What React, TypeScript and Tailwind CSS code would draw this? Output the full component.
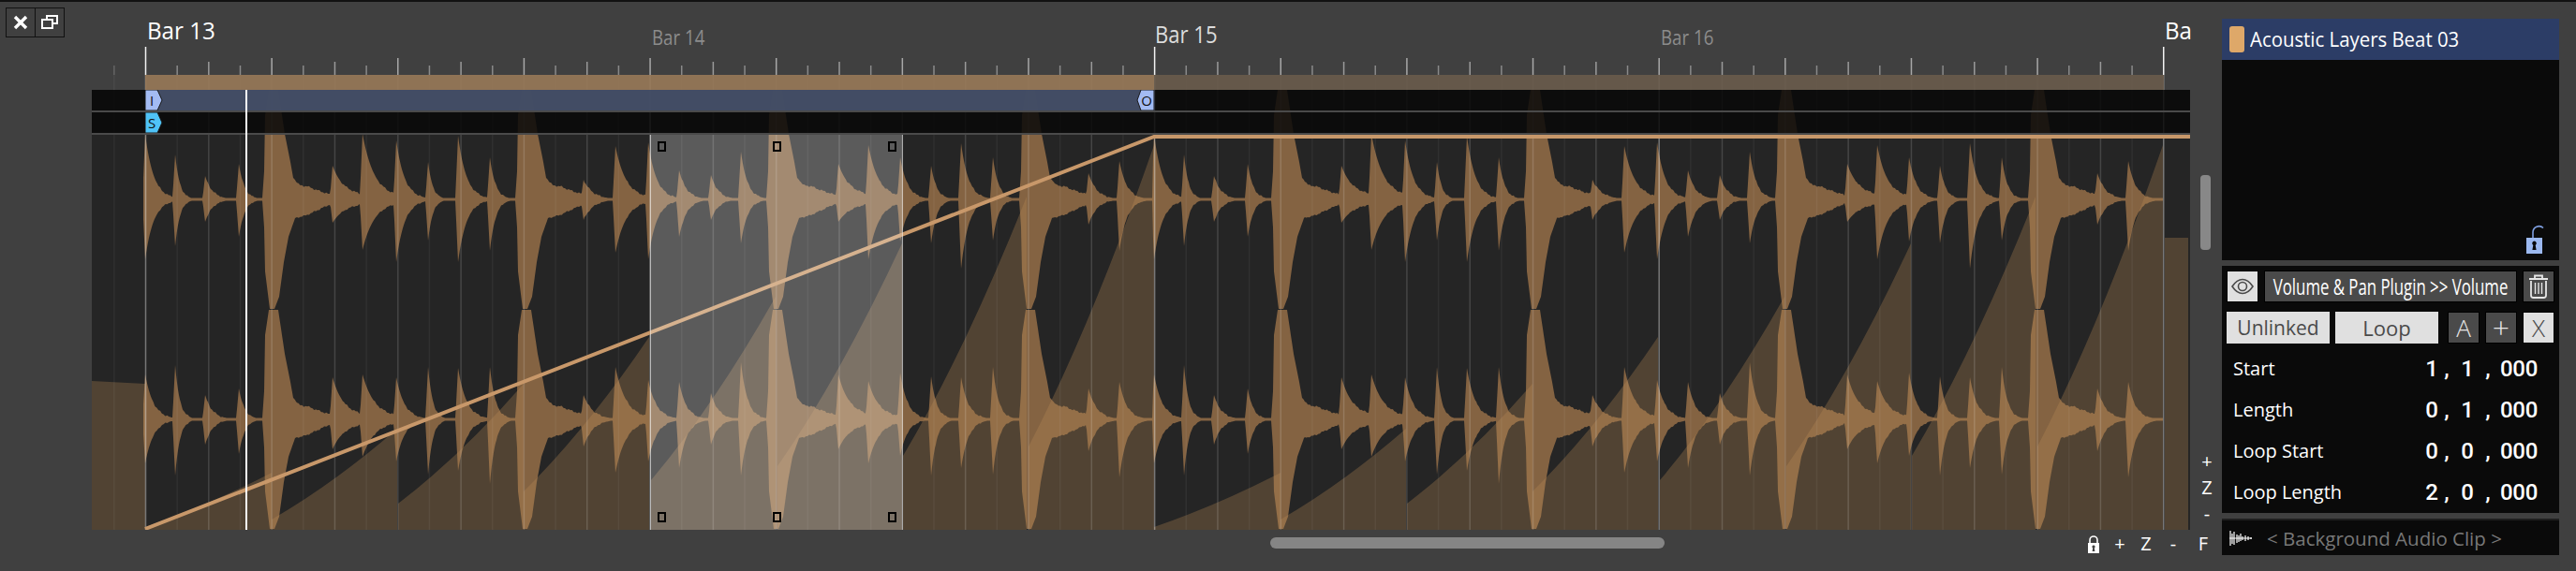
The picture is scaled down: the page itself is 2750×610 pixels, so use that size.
import { useMemo } from 'react';

const BAR_X = 155.5;
const SIXTEENTH = 33.66;
const LOOP = 1077;

// x, up / down of the left channel, up / down of the right channel, decay, tail
const hits: number[][] = [
  [155, 70, 64, 48, 47, 9, 0],
  [187, 48, 50, 58, 60, 5, 0],
  [219, 25, 24, 26, 27, 8, 0],
  [255, 38, 40, 33, 37, 6, 0],
  [355, 36, 25, 45, 32, 10, 9],
  [387, 70, 54, 48, 40, 12, 5],
  [423, 63, 67, 45, 45, 9, 0],
  [457, 40, 44, 56, 59, 5, 0],
  [489, 68, 67, 55, 55, 9, 0],
  [523, 45, 55, 56, 69, 6, 0],
  [623, 21, 22, 26, 29, 10, 0],
  [657, 57, 57, 56, 57, 11, 2],
  [692, 61, 64, 42, 45, 9, 0],
  [725, 31, 40, 40, 52, 8, 0],
  [759, 26, 22, 28, 27, 8, 0],
  [791, 51, 47, 61, 60, 7, 0],
  [895, 38, 24, 48, 32, 10, 9],
  [927, 58, 64, 41, 47, 10, 5],
  [961, 45, 45, 50, 39, 8, 0],
  [994, 36, 47, 46, 60, 6, 0],
  [1026, 60, 74, 45, 52, 8, 0],
  [1060, 45, 44, 56, 59, 6, 0],
  [1162, 28, 27, 33, 34, 9, 0],
  [1195, 41, 55, 40, 62, 8, 0],
];
const bigHits = [283, 553, 821, 1091];

const bigUp = [[-3, 0], [-1, 30], [0, 90], [4, 117], [14, 117], [21, 70], [27, 40], [30, 23], [37, 15], [45, 14], [55, 10], [70, 5], [80, 2]];
const bigDown = [[-3, 0], [-1, 30], [0, 77], [5, 117], [10, 117], [15, 104], [20, 67], [25, 40], [32, 20], [44, 17], [55, 12], [70, 5], [80, 2]];

function lerpTable(table: number[][], t: number) {
  if (t <= table[0][0] || t >= table[table.length - 1][0]) return 0;
  for (let i = 1; i < table.length; i++) {
    if (t <= table[i][0]) {
      const [a, av] = table[i - 1];
      const [b, bv] = table[i];
      return av + ((bv - av) * (t - a)) / (b - a);
    }
  }
  return 0;
}

function decay(t: number, amp: number, tau: number, tail: number) {
  if (t < -3 || t > 140) return 0;
  if (t < 0) return (amp * (t + 3)) / 3;
  const rest = tail * Math.exp(-t / 45);
  return rest + (amp - rest) * Math.exp(-t / tau);
}

function wobble(x: number) {
  return Math.sin(x * 1.7) * 0.5 + Math.sin(x * 0.63 + 1) * 0.6;
}

function channelPath(center: number, channel: 0 | 1) {
  const ups: string[] = [];
  const downs: string[] = [];
  for (let x = 153; x <= 2309; x++) {
    const local = x > 1230 ? x - LOOP : x;
    let up = 0;
    let down = 0;
    for (const h of hits) {
      up = Math.max(up, decay(local - h[0], h[1 + channel * 2], h[5], h[6]));
      down = Math.max(down, decay(local - h[0], h[2 + channel * 2], h[5], h[6]));
    }
    for (const b of bigHits) {
      up = Math.max(up, lerpTable(bigUp, local - b));
      down = Math.max(down, lerpTable(bigDown, local - b));
    }
    const w = up > 3 && up < 20 ? wobble(x) : 0;
    const u = Math.min(Math.max(up + w, x < 155 ? 0 : 1.5), 117);
    const d = Math.min(Math.max(down + w * 0.8, x < 155 ? 0 : 1.5), 117);
    ups.push(`${x},${(center - u).toFixed(1)}`);
    downs.unshift(`${x},${(center + d).toFixed(1)}`);
  }
  return `M${ups.join('L')}L${downs.join('L')}Z`;
}

// one saw tooth of the clip's volume shape
const teeth = [
  [155, 563, 290, 505],
  [290, 555, 424, 458],
  [425, 538, 559, 410],
  [559, 525, 693, 360],
  [695, 513, 828, 317],
  [830, 498, 963, 260],
  [964, 487, 1096, 210],
  [1098, 477, 1232, 155],
];

function toothPath([x0, y0, x1, y1]: number[], off: number) {
  const cx = (x0 + x1) / 2 + off;
  const cy = (y0 + y1) / 2 + (y0 - y1) * 0.1;
  return `M${x0 + off},566L${x0 + off},${y0}Q${cx},${cy} ${x1 + off},${y1}L${x1 + off},566Z`;
}

function Waveform() {
  const topWave = useMemo(() => channelPath(213, 0), []);
  const bottomWave = useMemo(() => channelPath(448, 1), []);
  const lines = Array.from({ length: 66 }, (_, k) => k - 1);

  return (
    <svg className="absolute inset-0" width={2240} height={486} viewBox="98 80 2240 486">
      <rect x={98} y={96} width={2240} height={470} fill="#252525" />
      <path d={topWave} fill="#846342" />
      <path d={bottomWave} fill="#846342" />
      <g fill="#bb8c57" fillOpacity={0.3}>
        <path d="M98,407L155,410L155,566L98,566Z" />
        {teeth.map((t) => (
          <path key={t[0]} d={toothPath(t, 0)} />
        ))}
        {teeth.map((t) => (
          <path key={t[0]} d={toothPath(t, LOOP)} />
        ))}
        <rect x={2311} y={254} width={25} height={312} />
      </g>
      {lines.map((i) => {
        const x = BAR_X + i * SIXTEENTH;
        let alpha = 0.05;
        if (i % 2 === 0) alpha = 0.15;
        if (i % 16 === 0) alpha = 0.38;
        return <rect key={i} x={x - 0.75} y={80} width={1.5} height={486} fill="#fff" fillOpacity={alpha} />;
      })}
      <polyline points="155,565 1232,146 2338,146" fill="none" stroke="#c8986a" strokeWidth={4} />
    </svg>
  );
}

function RulerTicks() {
  const ticks = Array.from({ length: 66 }, (_, k) => k - 1);
  return (
    <svg width={2240} height={30} viewBox="98 50 2240 30" className="block">
      {ticks.map((i) => {
        const x = BAR_X + i * SIXTEENTH;
        if (i % 32 === 0) return <rect key={i} x={x - 0.75} y={50} width={1.5} height={30} fill="#f2f2f2" />;
        if (i % 4 === 0) return <rect key={i} x={x - 0.75} y={62} width={1.5} height={18} fill="#a8a8a8" />;
        if (i % 2 === 0) return <rect key={i} x={x - 0.75} y={66} width={1.5} height={14} fill="#9a9a9a" />;
        return <rect key={i} x={x - 0.75} y={70} width={1.5} height={10} fill="#8a8a8a" fillOpacity={i < 0 ? 0.5 : 1} />;
      })}
    </svg>
  );
}

function Marker({ label, fill, flip }: { label: string; fill: string; flip?: boolean }) {
  const points = flip ? '19,0 5,0 1,11 5,22 19,22' : '0,0 13,0 18,11 13,22 0,22';
  return (
    <svg width={20} height={22} viewBox="0 0 20 22" className="block">
      <polygon points={points} fill={fill} stroke="#1a1a1a" strokeWidth={1} />
      <text x={flip ? 11 : 7} y={16.5} fontSize={15} textAnchor="middle" fill="#111" fontFamily="Open Sans, sans-serif">
        {label}
      </text>
    </svg>
  );
}

function Handle({ className }: { className: string }) {
  return <div className={`absolute w-[9px] h-[11px] border-2 border-black ${className}`} />;
}

function IconBtn({ children, light }: { children: React.ReactNode; light?: boolean }) {
  return (
    <div className={`w-[34px] h-[34px] shrink-0 flex items-center justify-center border border-black ${light ? 'bg-[#e0e0e0] text-[#4a4a4a]' : 'bg-[#4a4a4a] text-[#e6e6e6]'}`}>
      {children}
    </div>
  );
}

const rows = [
  { label: 'Start', v: ['1', '1', '000'] },
  { label: 'Length', v: ['0', '1', '000'] },
  { label: 'Loop Start', v: ['0', '0', '000'] },
  { label: 'Loop Length', v: ['2', '0', '000'] },
];

export default function App() {
  return (
    <div className="w-[2750px] h-[610px] bg-[#404040] border-t-2 border-[#111] flex font-['Open_Sans',sans-serif] text-white">
      {/* Left gutter */}
      <div className="w-[98px] shrink-0 pt-[6px] pl-[6px]">
        <div className="flex">
          <div className="w-[32px] h-[32px] border border-[#111] flex items-center justify-center">
            <svg width="16" height="16" viewBox="0 0 16 16">
              <path d="M2 2L14 14M14 2L2 14" stroke="#fff" strokeWidth="3.4" />
            </svg>
          </div>
          <div className="w-[32px] h-[32px] -ml-px border border-[#111] flex items-center justify-center">
            <svg width="20" height="18" viewBox="0 0 20 18" fill="none" stroke="#fff" strokeWidth="2">
              <path d="M7 6V2H18V10H13" />
              <rect x="2" y="6" width="11" height="9" />
            </svg>
          </div>
        </div>
      </div>

      {/* Timeline */}
      <div className="w-[2274px] flex flex-col shrink-0">
        <div className="flex h-[564px]">
          <div className="w-[2240px] shrink-0 flex flex-col">
            <div className="h-[48px] flex pl-[57px] whitespace-nowrap">
              <div className="w-[538.5px] shrink-0 pt-[16px] pl-[2px]">
                <span className="inline-block origin-left scale-x-[0.93] text-[26px] leading-[28px] text-white">Bar 13</span>
              </div>
              <div className="w-[538.5px] shrink-0 pt-[26px] pl-[2px]">
                <span className="inline-block origin-left scale-x-[0.85] text-[22px] leading-[22px] text-[#8c8c8c]">Bar 14</span>
              </div>
              <div className="w-[538.5px] shrink-0 pt-[20px] pl-[1px]">
                <span className="inline-block origin-left scale-x-[0.85] text-[26px] leading-[28px] text-[#dcdcdc]">Bar 15</span>
              </div>
              <div className="w-[538.5px] shrink-0 pt-[26px] pl-[2px]">
                <span className="inline-block origin-left scale-x-[0.85] text-[22px] leading-[22px] text-[#8c8c8c]">Bar 16</span>
              </div>
              <div className="w-[28px] shrink-0 pt-[16px] pl-[2px]">
                <span className="inline-block origin-left scale-x-[0.93] text-[26px] leading-[28px] text-white">Ba</span>
              </div>
            </div>
            <RulerTicks />

            <div className="relative h-[486px] w-[2240px] flex flex-col">
              <Waveform />
              {/* Clip strip */}
              <div className="relative h-[16px] ml-[57px] w-[2155px] flex">
                <div className="w-[1077px] bg-[#987958]/90" />
                <div className="flex-1 bg-[#695b4b]/90" />
              </div>
              {/* Loop lane */}
              <div className="relative h-[24px] bg-[#080808]/85 border-b-2 border-[#4a4a4a] pl-[57px]">
                <div className="h-[22px] w-[1078px] bg-[#465069]/95 relative">
                  <div className="absolute left-0 top-0">
                    <Marker label="I" fill="#a3bbf3" />
                  </div>
                  <div className="absolute right-0 top-0">
                    <Marker label="O" fill="#a3bbf3" flip />
                  </div>
                </div>
              </div>
              {/* Start marker lane */}
              <div className="relative h-[24px] bg-[#080808]/85 border-b-2 border-[#4a4a4a] pl-[57px]">
                <Marker label="S" fill="#4fc3f7" />
              </div>
              <div className="relative flex-1">
                <div className="absolute left-[596px] top-0 bottom-0 w-[270px] bg-white/25 border-x border-white/40">
                  <Handle className="left-[7px] top-[7px]" />
                  <Handle className="left-[130px] top-[7px]" />
                  <Handle className="left-[253px] top-[7px]" />
                  <Handle className="left-[7px] bottom-[8px]" />
                  <Handle className="left-[130px] bottom-[8px]" />
                  <Handle className="left-[253px] bottom-[8px]" />
                </div>
              </div>
              {/* Playhead */}
              <div className="absolute left-[164px] top-[16px] bottom-0 w-[2px] bg-white" />
            </div>
          </div>

          {/* Vertical scroll and zoom */}
          <div className="w-[34px] shrink-0 flex flex-col items-center pt-[185px] text-[20px] leading-[20px]">
            <div className="w-[11px] h-[80px] ml-[5px] -translate-x-[3px] rounded-[4px] bg-[#888888]" />
            <div className="mt-[216px] flex flex-col items-center gap-[8px] ml-[2px]">
              <span>+</span>
              <span>Z</span>
              <span>-</span>
            </div>
          </div>
        </div>

        {/* Bottom bar */}
        <div className="flex items-start text-[20px] leading-[20px]">
          <div className="ml-[1258px] mt-[8px] w-[421px] h-[12px] rounded-[6px] bg-[#858585] shrink-0" />
          <div className="ml-[451px] mt-[5px] flex items-center">
            <svg width="14" height="20" viewBox="0 0 14 20" className="shrink-0">
              <path d="M3 10V6a4 4 0 0 1 8 0v4" fill="none" stroke="#fff" strokeWidth="1.6" />
              <path fillRule="evenodd" fill="#fff" d="M1 9H13V20H1ZM7 11.5a1.6 1.6 0 0 0-.8 3L5.6 18H8.4L7.8 14.5a1.6 1.6 0 0 0-.8-3Z" />
            </svg>
            <span className="w-[14px] ml-[14px] text-center">+</span>
            <span className="w-[14px] ml-[14px] text-center">Z</span>
            <span className="w-[14px] ml-[15px] text-center">-</span>
            <span className="w-[14px] ml-[18px] text-center">F</span>
          </div>
        </div>
      </div>

      {/* Side panel */}
      <div className="w-[360px] shrink-0 pt-[18px] flex flex-col">
        <div className="h-[258px] bg-[#0a0a0a] flex flex-col">
          <div className="h-[44px] bg-[#2c3d66] flex items-center pl-[8px] gap-[6px] whitespace-nowrap">
            <div className="w-[16px] h-[28px] rounded-[3px] bg-[#dea869]" />
            <span className="inline-block origin-left scale-x-[0.97] text-[21px] leading-[28px]">Acoustic Layers Beat 03</span>
          </div>
          <div className="flex-1 flex items-end justify-end pr-[16px] pb-[7px]">
            <svg width="20" height="32" viewBox="0 0 20 32">
              <path d="M8 17V9a6.5 6.5 0 0 1 11-4.5" fill="none" stroke="#7f9fe0" strokeWidth="1.6" />
              <path fillRule="evenodd" fill="#9cb9f0" d="M1 15H18V32H1ZM9.5 18.5a2.4 2.4 0 0 0-1.2 4.4L7.4 28H11.6L10.7 22.9a2.4 2.4 0 0 0-1.2-4.4Z" />
            </svg>
          </div>
        </div>

        <div className="mt-[6px] h-[264px] bg-[#0a0a0a] px-[5px] pt-[5px] flex flex-col">
          <div className="flex gap-[6px] h-[34px]">
            <IconBtn light>
              <svg width="24" height="18" viewBox="0 0 24 18" fill="none" stroke="currentColor" strokeWidth="1.6">
                <path d="M1 9C5 3 9 1.5 12 1.5S19 3 23 9C19 15 15 16.5 12 16.5S5 15 1 9Z" />
                <circle cx="12" cy="9" r="4.5" />
              </svg>
            </IconBtn>
            <div className="w-[270px] bg-[#4a4a4a] border border-black flex items-center justify-center whitespace-nowrap">
              <span className="inline-block shrink-0 scale-x-[0.7] text-[24px] leading-[28px]">Volume &amp; Pan Plugin &gt;&gt; Volume</span>
            </div>
            <IconBtn>
              <svg width="22" height="26" viewBox="0 0 22 26" fill="none" stroke="currentColor" strokeWidth="1.8">
                <path d="M1 5H21M7 4.5V1.5H15V4.5" />
                <path d="M3 7V22.5A2.5 2.5 0 0 0 5.5 25H16.5A2.5 2.5 0 0 0 19 22.5V7" />
                <path d="M7.5 9V21M11 9V21M14.5 9V21" strokeWidth="1.4" />
              </svg>
            </IconBtn>
          </div>
          <div className="flex h-[34px] mt-[10px] text-[#4a4a4a]">
            <div className="w-[110px] bg-[#e0e0e0] flex items-center justify-center text-[21px] leading-[28px]">Unlinked</div>
            <div className="w-[110px] ml-[6px] bg-[#e0e0e0] flex items-center justify-center text-[22px] leading-[28px]">Loop</div>
            <div className="ml-[10px] flex gap-[6px] text-[26px] leading-[30px] font-light">
              <IconBtn>A</IconBtn>
              <IconBtn><span className="text-[32px]">+</span></IconBtn>
              <IconBtn light>X</IconBtn>
            </div>
          </div>
          <div className="mt-[5px]">
            {rows.map((r) => (
              <div key={r.label} className="h-[44px] flex items-center pl-[7px]">
                <span className="w-[205px] text-[20px] leading-[28px]">{r.label}</span>
                <div className="font-['Roboto',sans-serif] font-medium text-[24px] leading-[28px] flex items-baseline">
                  <span className="w-[14px] text-center">{r.v[0]}</span>
                  <span className="ml-[2px] w-[14px] text-center">,</span>
                  <span className="ml-[8px] w-[14px] text-center">{r.v[1]}</span>
                  <span className="ml-[8px] w-[14px] text-center">,</span>
                  <span className="ml-[6px] tracking-[-0.3px]">{r.v[2]}</span>
                </div>
              </div>
            ))}
          </div>
        </div>

        <div className="mt-[6px] h-[39px] bg-[#0a0a0a] border-t-2 border-[#1f1f1f] flex items-center pl-[8px] whitespace-nowrap">
          <svg width="24" height="18" viewBox="0 0 24 18" className="shrink-0">
            <path d="M0 9H24M1 1V17M3 4V15M5 2V16M8 5V14M10 6V13M12 4V12M14 7V11M17 6V12M20 7V11M23 8V10" stroke="#fff" strokeWidth="1.2" />
          </svg>
          <span className="ml-[16px] text-[20.5px] leading-[28px] text-[#787878]">&lt; Background Audio Clip &gt;</span>
        </div>
      </div>
    </div>
  );
}
